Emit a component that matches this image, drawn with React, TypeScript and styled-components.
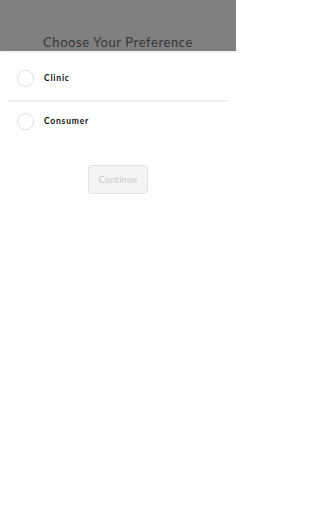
import React, { useState } from "react";
import styled, { createGlobalStyle } from "styled-components";

const GlobalStyle = createGlobalStyle`
  html, body {
    margin: 0;
    padding: 0;
    background: #ffffff;
  }
  body {
    font-family: Lato, "Open Sans", sans-serif;
  }
`;

const Page = styled.div`
  width: 236px;
  min-height: 512px;
  display: flex;
  flex-direction: column;
  background: #ffffff;
  overflow: hidden;
`;

const Backdrop = styled.div`
  height: 51px;
  flex-shrink: 0;
  background: #808080;
  display: flex;
  justify-content: center;
  align-items: flex-end;
  overflow: hidden;
`;

const Title = styled.h1`
  margin: 0 0 1px;
  font-family: Lato, "Open Sans", sans-serif;
  font-size: 13px;
  font-weight: 400;
  letter-spacing: 0.6px;
  color: #363636;
  line-height: 16px;
  white-space: nowrap;
`;

const Sheet = styled.div`
  flex: 1;
  padding: 8px 8px 0;
  display: flex;
  flex-direction: column;
  box-shadow: inset 0 2px 2px rgba(0, 0, 0, 0.05);
`;

const Option = styled.label`
  height: 38px;
  display: flex;
  align-items: center;
  gap: 10px;
  padding-left: 9px;
  cursor: pointer;
`;

const Radio = styled.span<{ $checked: boolean }>`
  width: 17px;
  height: 17px;
  border-radius: 50%;
  border: 1px solid #e0ddd8;
  box-sizing: border-box;
  background: ${(p) => (p.$checked ? "#3f3f3f" : "#ffffff")};
`;

const OptionLabel = styled.span`
  font-family: Lato, "Open Sans", sans-serif;
  font-size: 8.5px;
  font-weight: 700;
  letter-spacing: 0.8px;
  color: #111111;
`;

const Divider = styled.div`
  height: 2px;
  margin-top: 3px;
  background: #efefef;
`;

const Actions = styled.div`
  display: flex;
  justify-content: center;
  margin-top: 25px;
`;

const ContinueButton = styled.button`
  width: 60px;
  height: 29px;
  border: 1px solid #e3e3e3;
  border-radius: 3px;
  background: #f4f4f4;
  color: #c6c6c6;
  font-family: Lato, "Open Sans", sans-serif;
  font-size: 9px;
  letter-spacing: 0.3px;
  padding: 0;
`;

const options = ["Clinic", "Consumer"];

function App() {
  const [selected, setSelected] = useState<string | null>(null);

  return (
    <>
      <GlobalStyle />
      <Page>
        <Backdrop>
          <Title>Choose Your Preference</Title>
        </Backdrop>
        <Sheet>
          {options.map((opt, i) => (
            <React.Fragment key={opt}>
              {i > 0 && <Divider />}
              <Option onClick={() => setSelected(opt)}>
                <Radio $checked={selected === opt} />
                <OptionLabel>{opt}</OptionLabel>
              </Option>
            </React.Fragment>
          ))}
          <Actions>
            <ContinueButton disabled={!selected}>Continue</ContinueButton>
          </Actions>
        </Sheet>
      </Page>
    </>
  );
}

export default App;
